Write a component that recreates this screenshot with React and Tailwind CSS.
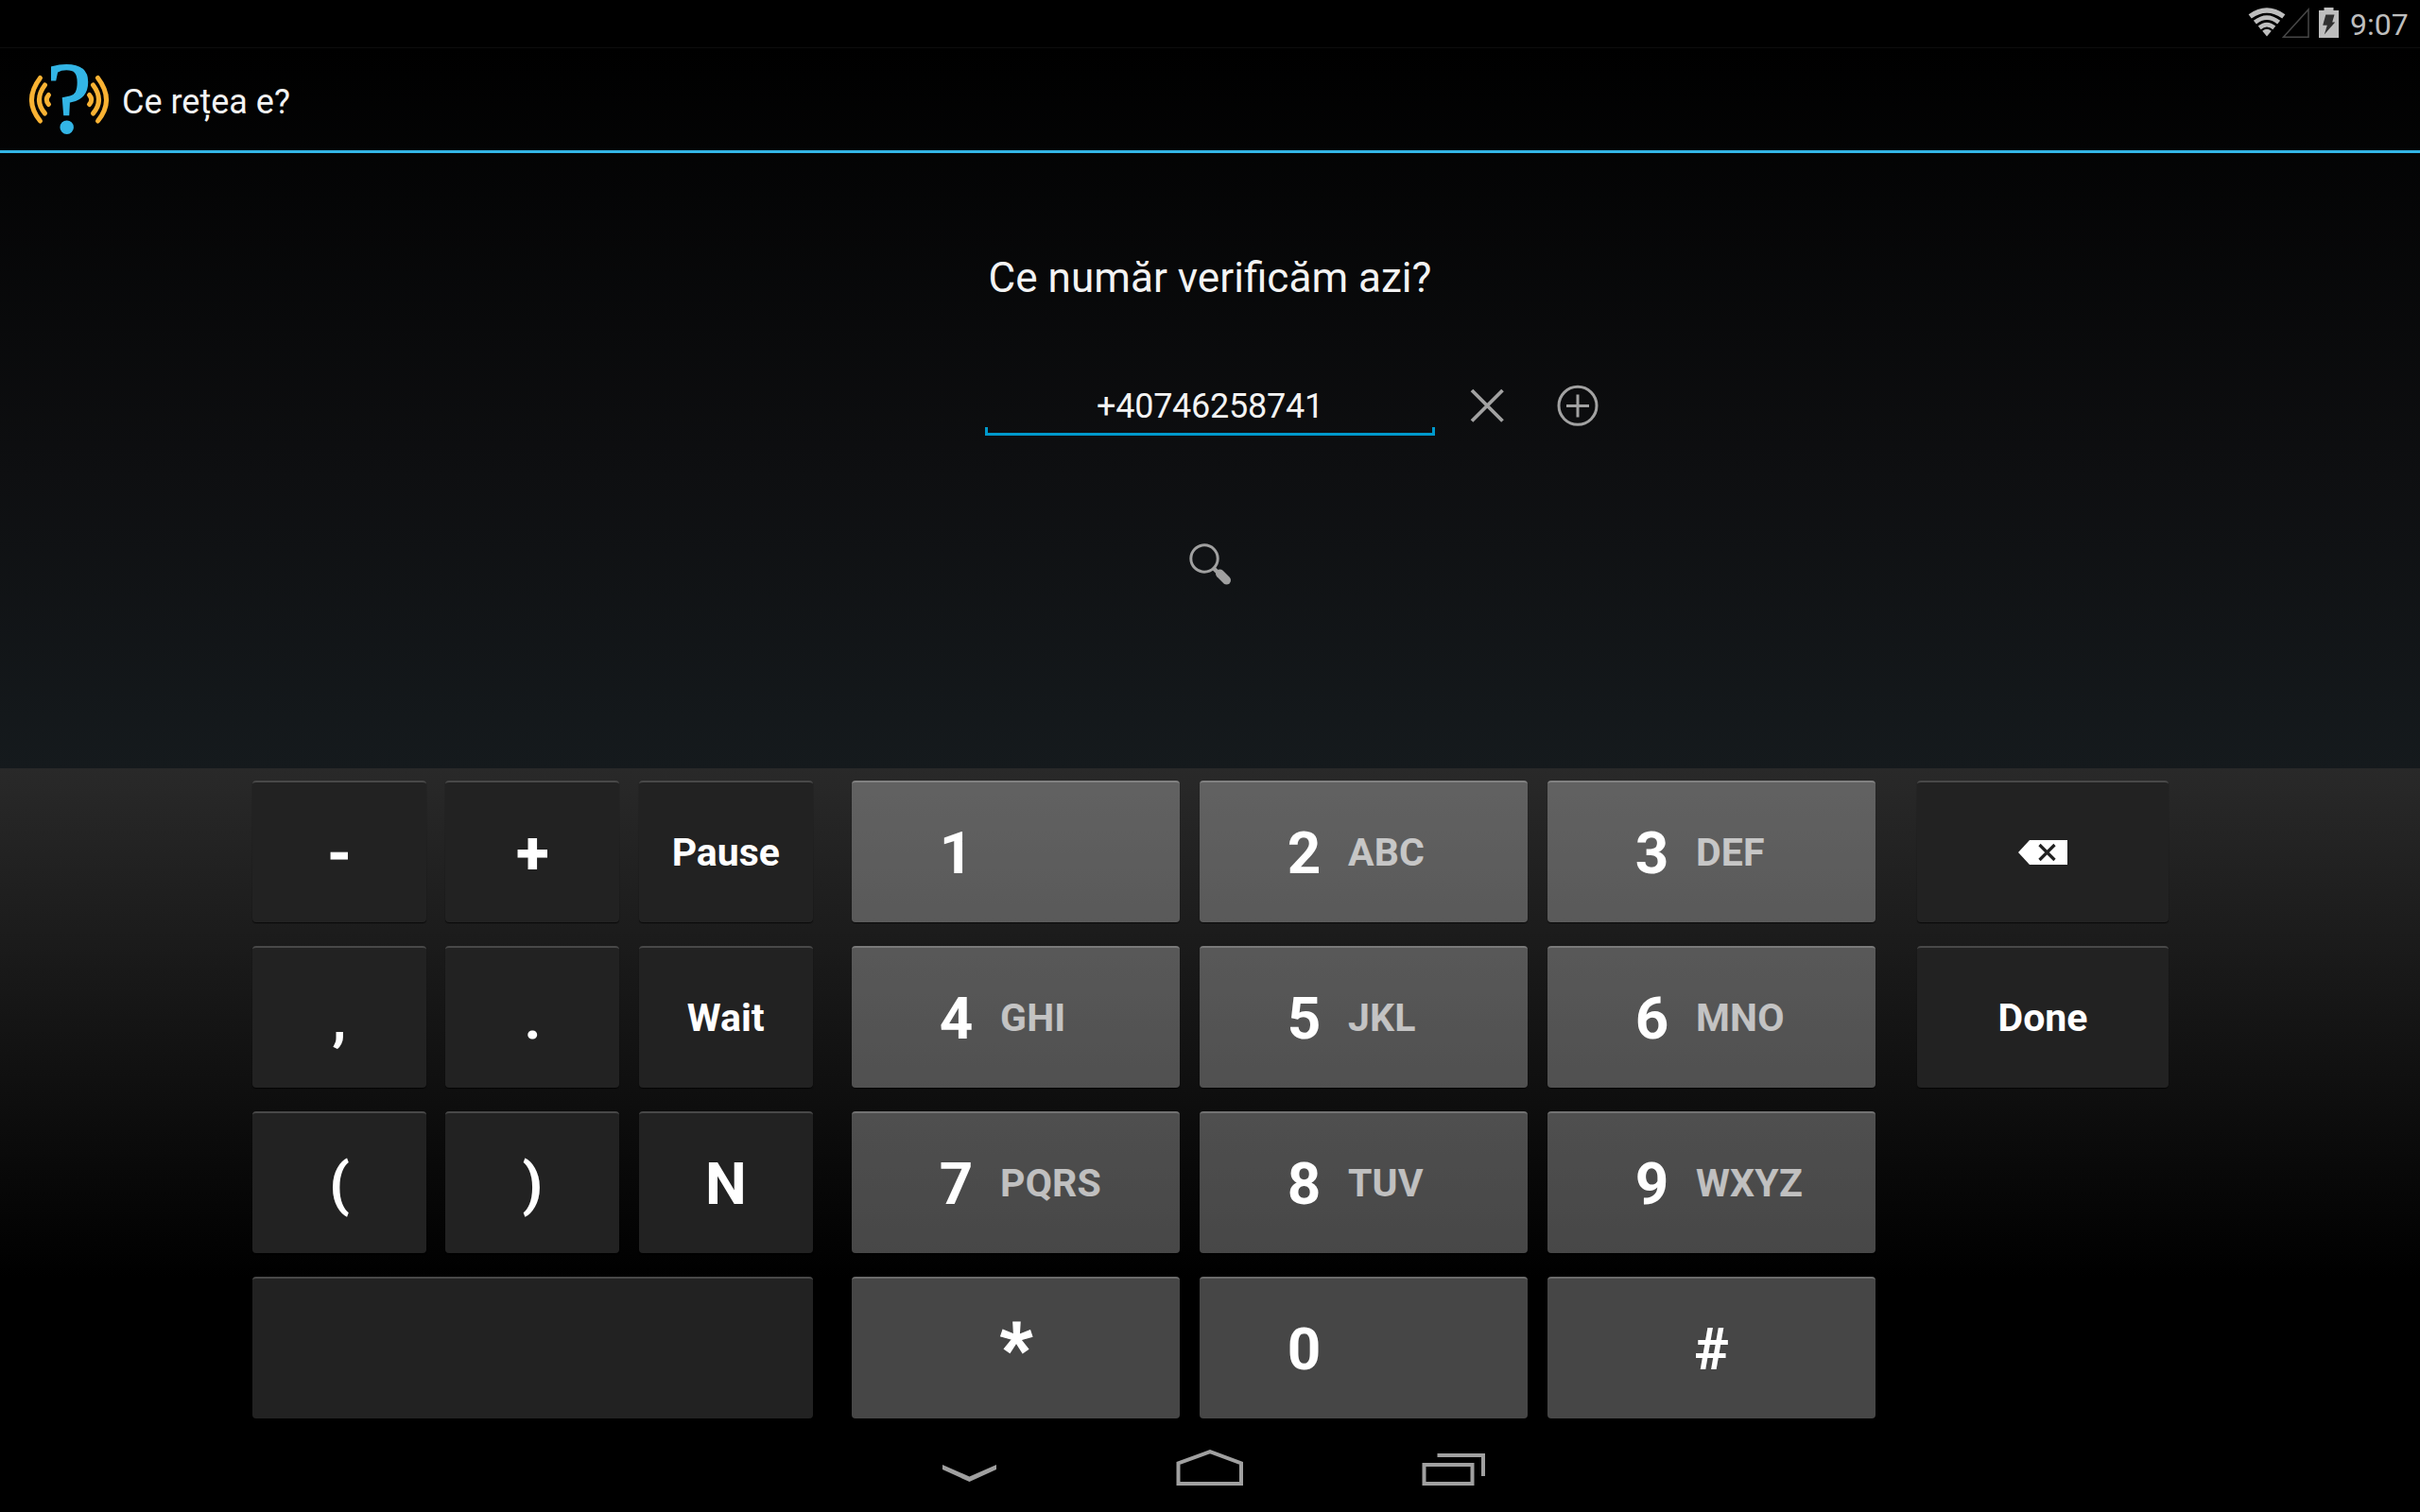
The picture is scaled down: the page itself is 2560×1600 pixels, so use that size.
function StatusBar() {
  return (
    <div className="flex h-[50px] items-start justify-end bg-black pr-[12px]">
      <svg className="h-[50px] w-[100px]" viewBox="2376 0 100 50">
        <g fill="none" stroke="#bebebe">
          <path d="M2398 38.5 L2393.2 32.8 Q2398 28.8 2402.8 32.8 Z" fill="#bebebe" stroke="none" />
          <path d="M2390.2 29.4 Q2398 23 2405.8 29.4" strokeWidth="4.6" />
          <path d="M2385.4 23.6 Q2398 13.6 2410.6 23.6" strokeWidth="4.8" />
          <path d="M2380.2 17.4 Q2398 4.6 2415.8 17.4" strokeWidth="5.4" />
        </g>
        <path d="M2415.5 39.3 L2442 39.3 L2442 10 Z" fill="none" stroke="#474747" strokeWidth="1.5" />
        <path d="M2453 11 h5.5 v-3 h10 v3 h5.5 v29 h-21 Z" fill="#bebebe" />
        <path d="M2460.3 15.5 h9.2 l-2.3 8 h3 l-11.4 13 l3 -9.8 h-4.6 Z" fill="#303030" />
      </svg>
      <span className="ml-[10px] h-[50px] w-[62px] whitespace-nowrap text-[32px] leading-[52px] text-[#bebebe]">9:07</span>
    </div>
  );
}

function AppLogo() {
  return (
    <svg className="h-[108px] w-[129px] overflow-visible" viewBox="0 51 129 108">
      <g fill="none" stroke="#f9b233" strokeWidth="5" strokeLinecap="round">
        <path d="M42.5 82.5 Q24.5 106 42.5 128" />
        <path d="M47.5 90 Q35.5 106 47.5 120" />
        <path d="M51.5 100.5 Q47 105.5 51.5 110.5" />
        <path d="M103.5 82.5 Q121.5 106 103.5 128" />
        <path d="M98.5 90 Q110.5 106 98.5 120" />
        <path d="M94.5 100.5 Q99 105.5 94.5 110.5" />
      </g>
      <text x="49.5" y="140" fill="#33b5e5" stroke="#33b5e5" strokeWidth="2" fontSize="106" fontFamily="Liberation Serif, serif">?</text>
    </svg>
  );
}

function ActionBar() {
  return (
    <header className="flex h-[112px] items-center border-t border-b-[3px] border-t-[#0d0d0d] border-b-[#33b5e5]">
      <AppLogo />
      <h1 className="pt-[6px] text-[36px] leading-[44px] text-[#f3f3f3]">Ce rețea e?</h1>
    </header>
  );
}

function Content() {
  return (
    <main className="flex h-[651px] flex-col items-center">
      <h2 className="mt-[106px] text-[44.1px] leading-[52px] text-[#f3f3f3]">Ce număr verificăm azi?</h2>
      <div className="mt-[83px] grid w-[2560px] grid-cols-[1042px_476px_1042px]">
        <div className="col-start-2">
          <div className="h-[49px] text-center text-[36px] leading-[55px] tracking-[-0.25px] text-[#f3f3f3]">+40746258741</div>
          <div className="h-[9px] border-x-[3px] border-b-[3px] border-[#0099cc]" />
        </div>
        <div className="flex">
          <svg className="h-[58px] w-[190px]" viewBox="1518 403 190 58" fill="none" stroke="#a2a2a2">
            <path d="M1557 413 L1589.5 445.5 M1589.5 413 L1557 445.5" strokeWidth="3.8" />
            <circle cx="1669" cy="429.3" r="20" strokeWidth="3" />
            <path d="M1657 429.5 h24 M1669 417.5 v24" strokeWidth="3" />
          </svg>
        </div>
      </div>
      <svg className="mt-[99px] h-[80px] w-[100px]" viewBox="1230 560 100 80">
        <circle cx="1274" cy="591" r="14.2" fill="none" stroke="#a0a0a0" strokeWidth="3" />
        <path d="M1283.5 601 L1289 606.5" stroke="#a0a0a0" strokeWidth="4.5" />
        <path d="M1290.5 607 L1297.5 614" stroke="#a0a0a0" strokeWidth="9" strokeLinecap="round" />
      </svg>
    </main>
  );
}

function DarkKey({ label, small, wide, heavy, children }) {
  return (
    <button
      className={
        "flex h-[150px] items-center justify-center rounded-[4px] border-t-2 border-[#484848] bg-[#222222] font-bold text-white shadow-[0_1px_1px_rgba(0,0,0,0.7)] " +
        (small ? "pt-px text-[41px] " : "text-[62px] ") +
        (heavy ? "[-webkit-text-stroke:1.2px_white] " : "") +
        (wide ? "col-span-3" : "")
      }
    >
      {label}
      {children}
    </button>
  );
}

function NumberKey({ digit, letters, centered }) {
  return (
    <button
      className={
        "flex h-[150px] items-center rounded-[4px] border-t-2 border-white/20 bg-[rgba(233,233,233,0.3)] font-bold text-white shadow-[0_1px_1px_rgba(0,0,0,0.7)] " +
        (centered ? "justify-center" : "pl-[80px]")
      }
    >
      <span
        className={
          "w-[61px] text-center leading-[73px] " +
          (digit === "*" ? "pl-px text-[76px] [-webkit-text-stroke:1.2px_white]" : "text-[62px]")
        }
      >
        {digit}
      </span>
      {letters && <span className="ml-[16px] text-[41px] leading-[48px] tracking-[0.2px] text-white/65">{letters}</span>}
    </button>
  );
}

function Keyboard() {
  return (
    <section className="flex h-[697px] bg-[linear-gradient(to_bottom,#292929_0px,#000000_540px)] pl-[267px] pt-[13px]">
      <div className="grid h-[675px] w-[593px] grid-cols-[184px_184px_184px] gap-x-[20.4px] gap-y-[25px]">
        <DarkKey label="-" heavy />
        <DarkKey label="+" heavy />
        <DarkKey label="Pause" small />
        <DarkKey label="," />
        <DarkKey label="." />
        <DarkKey label="Wait" small />
        <DarkKey label="(" />
        <DarkKey label=")" />
        <DarkKey label="N" />
        <DarkKey wide />
      </div>
      <div className="ml-[41px] grid h-[675px] grid-cols-[347px_347px_347px] gap-x-[21px] gap-y-[25px]">
        <NumberKey digit="1" />
        <NumberKey digit="2" letters="ABC" />
        <NumberKey digit="3" letters="DEF" />
        <NumberKey digit="4" letters="GHI" />
        <NumberKey digit="5" letters="JKL" />
        <NumberKey digit="6" letters="MNO" />
        <NumberKey digit="7" letters="PQRS" />
        <NumberKey digit="8" letters="TUV" />
        <NumberKey digit="9" letters="WXYZ" />
        <NumberKey digit="*" centered />
        <NumberKey digit="0" />
        <NumberKey digit="#" centered />
      </div>
      <div className="ml-[44px] flex w-[266px] flex-col gap-[25px]">
        <DarkKey>
          <svg className="h-[26px] w-[52px]" viewBox="0 0 52 26">
            <path d="M0 13 L12 0 H52 V26 H12 Z" fill="#ffffff" />
            <path d="M22.5 5 L38.5 21 M38.5 5 L22.5 21" stroke="#222222" strokeWidth="3.2" />
          </svg>
        </DarkKey>
        <DarkKey label="Done" small />
      </div>
    </section>
  );
}

function NavBar() {
  return (
    <nav className="flex h-[90px] justify-center bg-black">
      <svg className="h-[90px] w-[640px]" viewBox="960 1510 640 90" fill="none" stroke="#a0a0a0">
        <path d="M997 1550 L1025.5 1562.5 L1054 1550 V1555 L1025.5 1568 L997 1555 Z" fill="#a0a0a0" stroke="none" />
        <path d="M1246.5 1570 V1548.3 L1280 1536.2 L1313 1548.3 V1570 Z" strokeWidth="4" />
        <rect x="1506.5" y="1550" width="51" height="20" strokeWidth="4" />
        <path d="M1520.5 1540 H1569 V1562" strokeWidth="4" />
      </svg>
    </nav>
  );
}

export default function App() {
  return (
    <div className="h-[1600px] w-[2560px] overflow-hidden bg-[linear-gradient(to_bottom,#000000_50px,#0e0f11_500px,#151a1d_813px)] font-['Roboto',sans-serif]">
      <StatusBar />
      <ActionBar />
      <Content />
      <Keyboard />
      <NavBar />
    </div>
  );
}
